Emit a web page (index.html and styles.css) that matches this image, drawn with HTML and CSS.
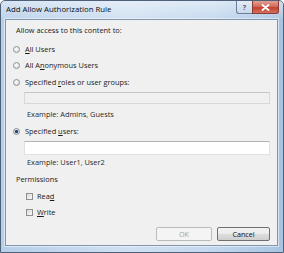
FILE: index.html
```html
<!DOCTYPE html>
<html>
<head>
<meta charset="utf-8">
<link rel="stylesheet" href="styles.css">
</head>
<body>
<div class="window">
  <div class="titlebar">
    <span class="title">Add Allow Authorization Rule</span>
    <div class="caption-btns">
      <div class="cbtn help">?</div>
      <div class="cbtn close">
        <svg width="9" height="7" viewBox="0 0 9 7"><path d="M1.5 1 L7.5 6 M7.5 1 L1.5 6" stroke="#fff" stroke-width="1.8" stroke-linecap="round"/></svg>
      </div>
    </div>
  </div>
  <div class="frame">
    <div class="client">
      <div class="row lead">Allow access to this content to:</div>
      <div class="row opt r1"><span class="radio"></span><span><u>A</u>ll Users</span></div>
      <div class="row opt r2"><span class="radio"></span><span>All A<u>n</u>onymous Users</span></div>
      <div class="row opt r3"><span class="radio"></span><span>Specified <u>r</u>oles or user groups:</span></div>
      <div class="textbox disabled tb1"></div>
      <div class="row example ex1">Example: Admins, Guests</div>
      <div class="row opt r4"><span class="radio checked"></span><span>Specified <u>u</u>sers:</span></div>
      <div class="textbox tb2"></div>
      <div class="row example ex2">Example: User1, User2</div>
      <div class="row perm">Permissions</div>
      <div class="row chk c1"><span class="check"></span><span>Rea<u>d</u></span></div>
      <div class="row chk c2"><span class="check"></span><span><u>W</u>rite</span></div>
      <div class="buttons">
        <div class="btn ok">OK</div>
        <div class="btn cancel">Cancel</div>
      </div>
    </div>
  </div>
</div>
</body>
</html>
```
FILE: styles.css
```css
* { box-sizing: border-box; }
html, body { margin: 0; padding: 0; background: #ffffff; }
body {
  font-family: "Open Sans", "DejaVu Sans", sans-serif;
  font-size: 7.4px;
  color: #1a1a1a;
}
.window {
  width: 284px;
  height: 253px;
  border: 1px solid #4e6178;
  border-radius: 5px 5px 0 0;
  background: linear-gradient(to right, #b7cfe9 0%, #cfe0f2 45%, #c3d8ee 75%, #a8c3e2 100%);
  display: flex;
  flex-direction: column;
  overflow: hidden;
}
.titlebar {
  height: 17px;
  display: flex;
  align-items: flex-start;
  background: linear-gradient(to bottom, rgba(255,255,255,0.45), rgba(255,255,255,0.1));
}
.title {
  padding-left: 5px;
  line-height: 17px;
  font-size: 7.8px;
  color: #0c0c0c;
}
.caption-btns {
  margin-left: auto;
  margin-right: 4px;
  display: flex;
  height: 13px;
}
.cbtn {
  height: 13px;
  display: flex;
  align-items: center;
  justify-content: center;
  border: 1px solid #6a7e98;
  border-top: none;
}
.help {
  width: 16px;
  border-radius: 0 0 0 3px;
  border-right: none;
  background: linear-gradient(to bottom, #e4ecf6, #c9d8ea);
  color: #4f5f77;
  font-size: 7px;
  font-weight: bold;
}
.close {
  width: 27px;
  border-radius: 0 0 3px 0;
  border-color: #8a3b33;
  background: linear-gradient(to bottom, #e2a193 0%, #d26d5c 45%, #c3412d 55%, #d3705c 100%);
}
.frame {
  flex: 1;
  padding: 1px 5px 6px 4px;
  display: flex;
}
.client {
  flex: 1;
  background: #f0f0f0;
  border: 1px solid #8196ae;
  box-shadow: 0 0 0 1px rgba(255,255,255,0.5);
  padding: 4px 7px 0 10px;
  display: flex;
  flex-direction: column;
}
.row {
  height: 12px;
  line-height: 12px;
  display: flex;
  align-items: center;
  white-space: nowrap;
}
.lead { margin-top: 0; }
.r1 { margin-top: 7px; margin-left: -3px; }
.r2 { margin-top: 4px; margin-left: -3px; }
.r3 { margin-top: 5px; margin-left: -3px; }
.r4 { margin-top: 5px; margin-left: -3px; }
.radio {
  width: 7px;
  height: 7px;
  border-radius: 50%;
  border: 1px solid #8e8f8f;
  background: radial-gradient(circle at 40% 40%, #ffffff 0%, #e6e6e6 60%, #d0d0d0 100%);
  margin-right: 5px;
  flex: none;
  display: flex;
  align-items: center;
  justify-content: center;
}
.radio.checked::after {
  content: "";
  width: 3px;
  height: 3px;
  border-radius: 50%;
  background: #1a3f74;
  box-shadow: 0 0 1px #2d5a97;
}
.textbox {
  margin-left: 8px;
  margin-right: 0;
  border: 1px solid #d6d8dc;
  border-top-color: #c3c5ca;
}
.tb1 { margin-top: 4px; height: 12px; background: #f0f0f0; }
.tb2 { margin-top: 4px; height: 14px; background: #ffffff; border-color: #dfe1e5; border-top-color: #b0b3b9; }
.example { margin-left: 11px; color: #2a2a2a; }
.ex1 { margin-top: 4px; }
.ex2 { margin-top: 1px; }
.perm { margin-top: 5px; }
.chk { margin-left: 10px; }
.c1 { margin-top: 5px; }
.c2 { margin-top: 4px; }
.check {
  width: 7px;
  height: 7px;
  border: 1px solid #8f8f8f;
  background: linear-gradient(135deg, #dcdcdc, #f7f7f7);
  margin-right: 4px;
  flex: none;
}
.buttons {
  margin-top: 9px;
  display: flex;
  justify-content: flex-end;
  gap: 5px;
  padding-right: 0;
}
.btn {
  height: 14px;
  display: flex;
  align-items: center;
  justify-content: center;
  border-radius: 2px;
  font-size: 7.2px;
}
.ok {
  width: 56px;
  border: 1px solid #b8bcbf;
  background: #f4f4f4;
  color: #a3a3a3;
}
.cancel {
  width: 53px;
  border: 1px solid #707070;
  background: linear-gradient(to bottom, #f2f2f2 0%, #ebebeb 50%, #dddddd 51%, #cfcfcf 100%);
  color: #111;
}
u { text-decoration-thickness: 1px; text-underline-offset: 1px; }
```
